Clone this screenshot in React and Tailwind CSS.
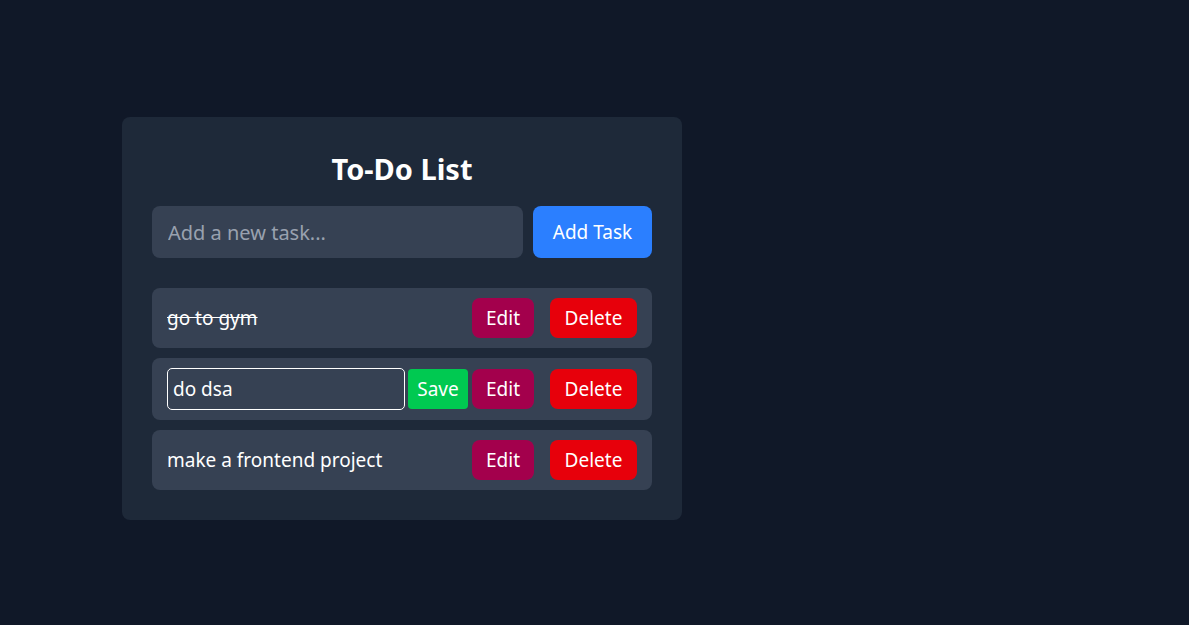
import React, { useState } from "react";

const FONT = { fontFamily: '"Noto Sans", "Open Sans", sans-serif' };

function TaskRow({ task, onToggle, onEdit, onSave, onDelete, onChange }) {
  return (
    <li className="flex items-center bg-gray-700 rounded-lg px-[15px] py-[10px]">
      {task.editing ? (
        <>
          <input
            value={task.draft}
            onChange={(e) => onChange(task.id, e.target.value)}
            className="flex-1 min-w-0 h-[42px] px-[5px] bg-transparent text-white text-[19px] border border-white rounded-[5px] outline-none"
          />
          <button
            onClick={() => onSave(task.id)}
            className="ml-[3px] w-[60px] h-10 bg-green-500 text-white text-[19px] rounded-[4px]"
          >
            Save
          </button>
        </>
      ) : (
        <span
          onClick={() => onToggle(task.id)}
          className={`flex-1 text-white text-[19px] cursor-pointer ${task.done ? "line-through" : ""}`}
        >
          {task.text}
        </span>
      )}
      <button
        onClick={() => onEdit(task.id)}
        className="ml-1 w-[62px] h-10 bg-pink-800 text-white text-[19px] rounded-lg"
      >
        Edit
      </button>
      <button
        onClick={() => onDelete(task.id)}
        className="ml-4 w-[87px] h-10 bg-red-600 text-white text-[19px] rounded-lg"
      >
        Delete
      </button>
    </li>
  );
}

export default function App() {
  const [input, setInput] = useState("");
  const [tasks, setTasks] = useState([
    { id: 1, text: "go to gym", done: true, editing: false, draft: "" },
    { id: 2, text: "do dsa", done: false, editing: true, draft: "do dsa" },
    { id: 3, text: "make a frontend project", done: false, editing: false, draft: "" },
  ]);

  const addTask = () => {
    if (!input.trim()) return;
    setTasks([...tasks, { id: Date.now(), text: input, done: false, editing: false, draft: "" }]);
    setInput("");
  };

  const update = (id, patch) =>
    setTasks(tasks.map((t) => (t.id === id ? { ...t, ...patch(t) } : t)));

  return (
    <div className="min-h-screen bg-gray-900 pt-[117px] pl-[122px]" style={FONT}>
      <div className="w-[560px] bg-gray-800 rounded-lg p-[30px]">
        {/* TITLE */}
        <h1 className="text-center text-white font-bold text-[29px] leading-[43px] mb-4">
          To-Do List
        </h1>

        {/* INPUT */}
        <div className="flex gap-[10px] mb-[30px]">
          <input
            value={input}
            onChange={(e) => setInput(e.target.value)}
            placeholder="Add a new task..."
            className="flex-1 min-w-0 h-[52px] px-4 bg-gray-700 text-white text-xl rounded-lg outline-none placeholder:text-gray-400"
          />
          <button
            onClick={addTask}
            className="w-[119px] h-[52px] bg-blue-500 text-white text-[19px] rounded-lg"
          >
            Add Task
          </button>
        </div>

        {/* LIST */}
        <ul className="flex flex-col gap-[10px]">
          {tasks.map((task) => (
            <TaskRow
              key={task.id}
              task={task}
              onToggle={(id) => update(id, (t) => ({ done: !t.done }))}
              onEdit={(id) => update(id, (t) => ({ editing: true, draft: t.text }))}
              onSave={(id) => update(id, (t) => ({ editing: false, text: t.draft }))}
              onChange={(id, v) => update(id, () => ({ draft: v }))}
              onDelete={(id) => setTasks(tasks.filter((t) => t.id !== id))}
            />
          ))}
        </ul>
      </div>
    </div>
  );
}
